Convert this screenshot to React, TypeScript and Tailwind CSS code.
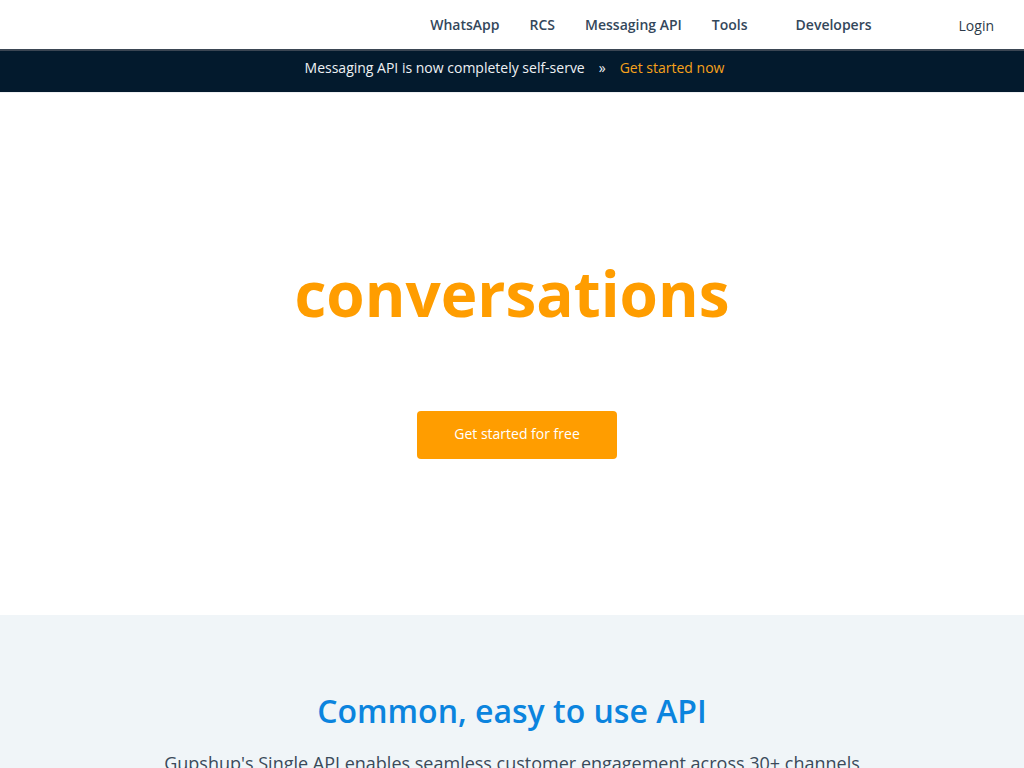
export default function App() {
  return (
    <div className="min-h-screen bg-white" style={{ fontFamily: '"Open Sans", sans-serif' }}>
      <header className="h-[49px] flex items-center justify-end pr-[30px] bg-white">
        <nav className="flex items-center text-[14px] font-semibold text-[#34475b]">
          <a className="mr-[30px]">WhatsApp</a>
          <a className="mr-[30px]">RCS</a>
          <a className="mr-[30px]">Messaging API</a>
          <a className="mr-[48px]">Tools</a>
          <a className="mr-[87px]">Developers</a>
          <a className="font-medium text-[#2d3b4a] mt-[2px]">Login</a>
        </nav>
      </header>
      <div className="h-[43px] bg-[#031a2d] border-t-2 border-[#3b4653] flex items-center justify-center pl-[5px] pb-[8px] text-[14px]">
        <span className="text-[#eef1f4]">Messaging API is now completely self-serve</span>
        <span className="text-[#eef1f4] mx-[14px]">»</span>
        <a className="text-[#f7a21b]">Get started now</a>
      </div>
      <section className="h-[523px] flex flex-col items-center border-t border-[#eef0f2]">
        <h1 className="mt-[160px] text-[62px] leading-[80px] font-bold text-[#ff9d00]">conversations</h1>
        <button className="mt-[78px] ml-[10px] w-[200px] h-[48px] pb-[4px] rounded-[4px] bg-[#ff9d00] text-white text-[14px]">
          Get started for free
        </button>
      </section>
      <section className="bg-[#f0f5f8] flex flex-col items-center pt-[72px] pb-[60px]">
        <h2 className="text-[32px] leading-[48px] font-semibold text-[#0b84de]">Common, easy to use API</h2>
        <p className="mt-[14px] text-[18px] leading-[28px] text-[#3a4a5a]">
          Gupshup's Single API enables seamless customer engagement across 30+ channels
        </p>
      </section>
    </div>
  );
}
